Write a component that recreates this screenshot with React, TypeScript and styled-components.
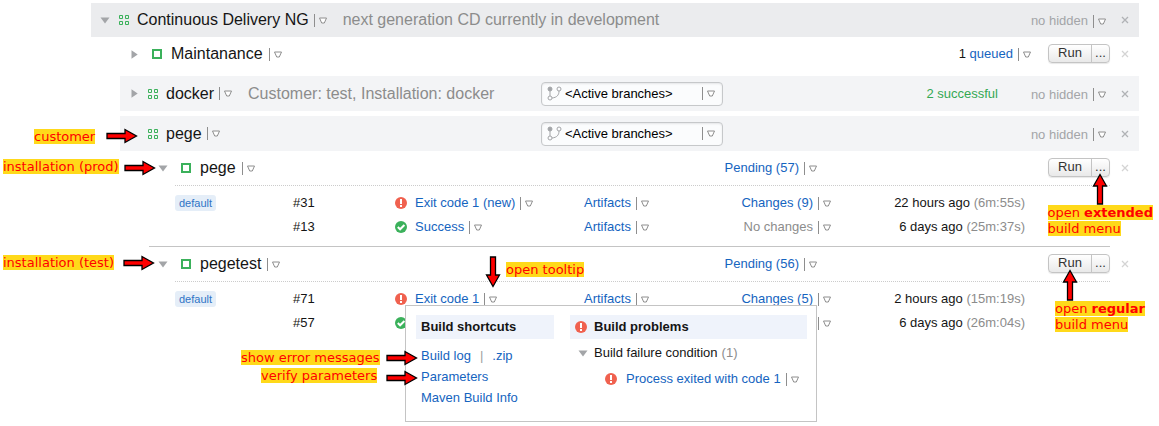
import React from "react";
import styled, { createGlobalStyle } from "styled-components";

const c = {
  text: "#151515",
  link: "#1564c0",
  muted: "#8c8c8c",
  faint: "#a3a5a8",
  green: "#34a853",
  red: "#f0614f",
};

const Global = createGlobalStyle`
  * { box-sizing: border-box; }
  body {
    margin: 0;
    background: #fff;
    color: ${c.text};
    font: 13px/16px "Liberation Sans", Arial, sans-serif;
  }
  button, select { font: inherit; color: inherit; }
  svg { display: block; flex: none; }
`;

const Page = styled.main`
  position: relative;
  min-width: 1100px;
  min-height: 100vh;
  padding: 3px 20px 0 91px;
`;

const Children = styled.div`
  padding-left: 29px;
`;

const Row = styled.div<{ $bg?: string; $height?: number; $after?: number }>`
  display: flex;
  align-items: center;
  height: ${(p) => p.$height || 34}px;
  margin-bottom: ${(p) => p.$after || 0}px;
  padding: 0 10px 0 9px;
  background: ${(p) => p.$bg || "transparent"};
  white-space: nowrap;
`;

const Spacer = styled.div`
  flex: 1;
`;

const IconButton = styled.button`
  display: flex;
  align-items: center;
  justify-content: center;
  width: 10px;
  height: 16px;
  padding: 0;
  border: 0;
  background: none;
  color: ${c.faint};
`;

const TogglePlace = styled.span`
  width: 10px;
`;

const CloseButton = styled(IconButton)<{ $light?: boolean }>`
  width: 8px;
  margin-left: ${(p) => (p.$light ? 11 : 15)}px;
  color: ${(p) => (p.$light ? "#d4d4d4" : "#b0b2b5")};
`;

const TypeIcon = styled.span<{ $before: number; $after: number }>`
  margin: 0 ${(p) => p.$after}px 0 ${(p) => p.$before}px;
`;

const Name = styled.h2`
  margin: 0;
  font-size: 16px;
  line-height: 20px;
  font-weight: 400;
`;

const Description = styled.span`
  margin-left: 16px;
  font-size: 16px;
  line-height: 20px;
  color: ${c.muted};
`;

const CaretButton = styled.button<{ $gap?: number }>`
  display: inline-flex;
  align-items: center;
  gap: 4px;
  height: 13px;
  margin-left: ${(p) => p.$gap ?? 5}px;
  padding: 0;
  border: 0;
  background: none;
  vertical-align: middle;
  &::before {
    content: "";
    width: 1px;
    height: 13px;
    background: #8e8e8e;
  }
`;

const Link = styled.a`
  color: ${c.link};
  text-decoration: none;
`;

const Successful = styled.span`
  width: 275px;
  text-align: right;
  color: ${c.green};
`;

const Hidden = styled.span`
  display: flex;
  align-items: center;
  justify-content: flex-end;
  width: 108px;
  padding-top: 2px;
  color: ${c.faint};
`;

const BranchBox = styled.label`
  display: flex;
  align-items: center;
  width: 182px;
  height: 24px;
  padding: 0 7px 0 5px;
  border: 1px solid #c6c8ca;
  border-radius: 4px;
  background: #fbfcfd;
  box-shadow: inset 0 1px 2px #e4e5e7;
  color: #000;
`;

const BranchSelect = styled.select`
  appearance: none;
  flex: 1;
  min-width: 0;
  margin-left: 3px;
  padding: 0;
  border: 0;
  background: none;
`;

const SelectCaret = styled.span`
  display: flex;
  align-items: center;
  gap: 4px;
  padding-left: 4px;
  &::before {
    content: "";
    width: 1px;
    height: 13px;
    background: #8e8e8e;
  }
`;

const Pending = styled.span<{ $right: number }>`
  display: flex;
  align-items: center;
  margin-right: ${(p) => p.$right}px;
`;

const RunGroup = styled.div`
  display: flex;
  height: 19px;
  border: 1px solid #c4c4c4;
  border-radius: 4px;
  background: linear-gradient(#fff, #e9e9e9);
  box-shadow: 0 1px 1px #e8e8e8;
  margin-bottom: 2px;
`;

const RunButton = styled.button<{ $width: number }>`
  width: ${(p) => p.$width}px;
  padding: 0;
  border: 0;
  background: none;
  color: #333;
  line-height: 16px;
  & + & {
    border-left: 1px solid #c4c4c4;
  }
`;

const Installation = styled.section`
  padding-left: 29px;
`;

const Builds = styled.div`
  margin: 0 29px 0 26px;
  padding: 5px 0 7px;
  border-top: 1px dotted #ccc;
`;

const Divider = styled.hr`
  height: 1px;
  margin: 0 29px 0 0;
  border: 0;
  background: #c4c4c4;
`;

const Table = styled.table`
  width: 100%;
  table-layout: fixed;
  border-collapse: collapse;
  white-space: nowrap;
`;

const Cell = styled.td<{ $right?: boolean; $end?: number }>`
  height: 24px;
  padding: 0 ${(p) => p.$end || 0}px 0 0;
  text-align: ${(p) => (p.$right ? "right" : "left")};
`;

const Inline = styled.span<{ $right?: boolean }>`
  position: relative;
  display: flex;
  align-items: center;
  justify-content: ${(p) => (p.$right ? "flex-end" : "flex-start")};
`;

const StatusLink = styled(Link)`
  margin-left: 8px;
`;

const Tag = styled.span`
  display: block;
  width: max-content;
  padding: 0 4px;
  border-radius: 3px;
  background: #e5eef8;
  color: #2f74c6;
  font-size: 11px;
  line-height: 16px;
`;

const Grey = styled.span`
  color: ${c.muted};
`;

const Popup = styled.div`
  position: absolute;
  z-index: 2;
  top: 14px;
  left: 10px;
  display: flex;
  gap: 16px;
  width: 412px;
  height: 117px;
  padding: 9px 9px 0 10px;
  border: 1px solid #c4c4c4;
  background: #fff;
`;

const PopupColumn = styled.div<{ $width?: number }>`
  flex: ${(p) => (p.$width ? `0 0 ${p.$width}px` : "1")};
`;

const PopupTitle = styled.h3`
  display: flex;
  align-items: center;
  gap: 7px;
  height: 24px;
  margin: 0 0 6px;
  padding: 0 5px;
  background: #eff3fb;
  font-size: 13px;
`;

const Shortcuts = styled.ul`
  margin: 0;
  padding: 3px 0 0 5px;
  list-style: none;
`;

const Shortcut = styled.li`
  height: 21px;
`;

const Pipe = styled.span`
  margin: 0 9px;
  color: #a0a0a0;
`;

const Problem = styled.div<{ $indent: number; $gap: number }>`
  display: flex;
  align-items: center;
  height: 16px;
  gap: ${(p) => p.$gap}px;
  margin-bottom: 10px;
  padding-left: ${(p) => p.$indent}px;
`;

const ProblemText = styled.span`
  display: flex;
  align-items: center;
  gap: 4px;
`;

const Note = styled.div<{ $left?: number; $right?: number; $top: number }>`
  position: absolute;
  z-index: 3;
  top: ${(p) => p.$top}px;
  ${(p) => (p.$left !== undefined ? `left: ${p.$left}px;` : `right: ${p.$right}px;`)}
  color: #f00;
  font: 13px/16px "DejaVu Sans", Verdana, sans-serif;
  white-space: nowrap;
`;

const Mark = styled.mark`
  display: block;
  width: max-content;
  height: 15px;
  margin-bottom: 1px;
  background: #ffd91a;
  color: inherit;
  line-height: 15px;
`;

const Pointer = styled.div<{ $left?: number; $right?: number; $top: number; $turn?: number }>`
  position: absolute;
  z-index: 3;
  top: ${(p) => p.$top}px;
  ${(p) => (p.$left !== undefined ? `left: ${p.$left}px;` : `right: ${p.$right}px;`)}
  transform: rotate(${(p) => p.$turn || 0}deg);
`;

const Triangle = () => (
  <svg width="8" height="7" viewBox="0 0 8 7">
    <path d="M.5 1h7L5.300 6H2.700z" fill="#fff" stroke="#8e8e8e" strokeLinejoin="round" />
  </svg>
);

const Caret = ({ gap, label }: { gap?: number; label: string }) => (
  <CaretButton $gap={gap} aria-label={label}>
    <Triangle />
  </CaretButton>
);

const Toggle = ({ open }: { open: boolean }) => (
  <IconButton aria-label="Toggle" aria-expanded={open}>
    {open ? (
      <svg width="10" height="7" viewBox="0 0 10 7"><path d="M.5 .5h9L5 6.5z" fill="currentColor" /></svg>
    ) : (
      <svg width="7" height="9" viewBox="0 0 7 9"><path d="M.5 .3v8.4L6.7 4.5z" fill="currentColor" /></svg>
    )}
  </IconButton>
);

const Close = ({ light }: { light?: boolean }) => (
  <CloseButton $light={light} aria-label="Hide">
    <svg width="8" height="8" viewBox="0 0 8 8"><path d="M1 1l6 6M7 1L1 7" stroke="currentColor" strokeWidth="1.3" /></svg>
  </CloseButton>
);

const ProjectIcon = () => (
  <svg width="10" height="10" viewBox="0 0 10 10" fill="none" stroke="#3bb15b">
    <path d="M.5.5h3v3h-3zM6.5.5h3v3h-3zM.5 6.5h3v3h-3zM6.5 6.5h3v3h-3z" />
  </svg>
);

const ConfigIcon = () => (
  <svg width="10" height="10" viewBox="0 0 10 10">
    <path d="M1 1h8v8H1z" fill="#fff" stroke="#3bb15b" strokeWidth="2" />
  </svg>
);

const ErrorIcon = () => (
  <svg width="12" height="12" viewBox="0 0 12 12">
    <circle cx="6" cy="6" r="6" fill={c.red} />
    <path d="M5 2h2v5H5zM5 8h2v2H5z" fill="#fff" />
  </svg>
);

const SuccessIcon = () => (
  <svg width="12" height="12" viewBox="0 0 12 12">
    <circle cx="6" cy="6" r="6" fill="#3bb15b" />
    <path d="M2.8 6l2.3 2.3L9.4 4" fill="none" stroke="#fff" strokeWidth="2" />
  </svg>
);

const BranchIcon = () => (
  <svg width="15" height="15" viewBox="0 0 15 15" fill="none" stroke="#a3a5a8">
    <circle cx="3" cy="3" r="2" fill="#a3a5a8" />
    <circle cx="3" cy="12" r="2" />
    <circle cx="12" cy="3" r="2" />
    <path d="M3 5v5M12 5c0 4-2 6.500-7 7" />
  </svg>
);

const Arrow = () => (
  <svg width="32" height="16" viewBox="0 0 32 16">
    <path d="M1 5.500h18V1.500L30.500 8 19 14.500v-4H1z" fill="#f00" stroke="#000" strokeWidth="1.300" />
  </svg>
);

const Branches = ({ label }: { label: string }) => (
  <BranchBox>
    <BranchIcon />
    <BranchSelect aria-label={label}>
      <option>&lt;Active branches&gt;</option>
    </BranchSelect>
    <SelectCaret><Triangle /></SelectCaret>
  </BranchBox>
);

type ProjectProps = {
  name: string;
  open?: boolean;
  top?: boolean;
  description?: string;
  branches?: boolean;
  status?: string;
  after?: number;
};

const Project = ({ name, open, top, description, branches, status, after }: ProjectProps) => (
  <Row $bg={top ? "#ebecee" : "#f3f4f6"} $height={top ? 34 : 35} $after={after}>
    {open === undefined ? <TogglePlace /> : <Toggle open={open} />}
    <TypeIcon $before={9} $after={8}><ProjectIcon /></TypeIcon>
    <Name>{name}</Name>
    <Caret label={`${name} menu`} />
    {description && <Description>{description}</Description>}
    <Spacer />
    {branches && <Branches label={`${name} branches`} />}
    {branches && <Successful>{status}</Successful>}
    <Hidden>no hidden<Caret label="Hidden configurations" /></Hidden>
    <Close />
  </Row>
);

type ConfigProps = { name: string; open: boolean; children: React.ReactNode; right: number; after?: number };

const Config = ({ name, open, children, right, after }: ConfigProps) => (
  <Row $after={after}>
    <Toggle open={open} />
    <TypeIcon $before={13} $after={9}><ConfigIcon /></TypeIcon>
    <Name>{name}</Name>
    <Caret gap={6} label={`${name} menu`} />
    <Spacer />
    <Pending $right={right}>{children}<Caret label="Queue details" /></Pending>
    <RunGroup>
      <RunButton $width={42}>Run</RunButton>
      <RunButton $width={18} aria-label="Run custom build">...</RunButton>
    </RunGroup>
    <Close light />
  </Row>
);

type Build = {
  number: string;
  ok?: boolean;
  status?: string;
  artifacts?: boolean;
  changes?: string;
  when: string;
  took: string;
  popup?: boolean;
};

const BuildPopup = () => (
  <Popup role="tooltip">
    <PopupColumn $width={138}>
      <PopupTitle>Build shortcuts</PopupTitle>
      <Shortcuts>
        <Shortcut><Link href="#log">Build log</Link><Pipe>|</Pipe><Link href="#zip">.zip</Link></Shortcut>
        <Shortcut><Link href="#parameters">Parameters</Link></Shortcut>
        <Shortcut><Link href="#maven">Maven Build Info</Link></Shortcut>
      </Shortcuts>
    </PopupColumn>
    <PopupColumn>
      <PopupTitle><ErrorIcon />Build problems</PopupTitle>
      <Problem $indent={8} $gap={6}>
        <Toggle open />
        <ProblemText>Build failure condition <Grey>(1)</Grey></ProblemText>
      </Problem>
      <Problem $indent={35} $gap={9}>
        <ErrorIcon />
        <ProblemText>
          <Link href="#problem">Process exited with code 1</Link>
          <Caret gap={1} label="Problem menu" />
        </ProblemText>
      </Problem>
    </PopupColumn>
  </Popup>
);

const BuildTable = ({ builds }: { builds: Build[] }) => (
  <Table>
    <colgroup>
      <col width="118" />
      <col width="102" />
      <col />
      <col width="159" />
      <col width="88" />
      <col width="279" />
    </colgroup>
    <tbody>
      {builds.map((b, i) => (
        <tr key={b.number}>
          <Cell>{i === 0 && <Tag>default</Tag>}</Cell>
          <Cell>{b.number}</Cell>
          <Cell>
            <Inline>
              {b.ok ? <SuccessIcon /> : <ErrorIcon />}
              {b.status && <StatusLink href="#build">{b.status}</StatusLink>}
              {b.status && <Caret label="Build details" />}
              {b.popup && <BuildPopup />}
            </Inline>
          </Cell>
          <Cell>
            {b.artifacts && <Inline><Link href="#artifacts">Artifacts</Link><Caret label="Artifacts list" /></Inline>}
          </Cell>
          <Cell>
            <Inline $right>
              {b.changes && (b.changes === "No changes" ? <Grey>{b.changes}</Grey> : <Link href="#changes">{b.changes}</Link>)}
              <Caret label="Changes list" />
            </Inline>
          </Cell>
          <Cell $right $end={85}>{b.when} <Grey>({b.took})</Grey></Cell>
        </tr>
      ))}
    </tbody>
  </Table>
);

const prodBuilds: Build[] = [
  { number: "#31", status: "Exit code 1 (new)", artifacts: true, changes: "Changes (9)", when: "22 hours ago", took: "6m:55s" },
  { number: "#13", ok: true, status: "Success", artifacts: true, changes: "No changes", when: "6 days ago", took: "25m:37s" },
];

const testBuilds: Build[] = [
  { number: "#71", status: "Exit code 1", artifacts: true, changes: "Changes (5)", when: "2 hours ago", took: "15m:19s", popup: true },
  { number: "#57", ok: true, when: "6 days ago", took: "26m:04s" },
];

export default function App() {
  return (
    <Page>
      <Global />
      <Project top open name="Continuous Delivery NG" description="next generation CD currently in development" />
      <Children>
        <Config name="Maintanance" open={false} right={17} after={5}>
          <span>1 <Link href="#queue">queued</Link></span>
        </Config>
        <Project
          name="docker"
          open={false}
          description="Customer: test, Installation: docker"
          branches
          status="2 successful"
          after={5}
        />
        <Project name="pege" branches />
        <Installation>
          <Config name="pege" open right={231}><Link href="#pending">Pending (57)</Link></Config>
          <Builds><BuildTable builds={prodBuilds} /></Builds>
          <Divider />
          <Config name="pegetest" open right={231}><Link href="#pending">Pending (56)</Link></Config>
          <Builds><BuildTable builds={testBuilds} /></Builds>
        </Installation>
      </Children>

      <Note $left={34} $top={129}><Mark>customer</Mark></Note>
      <Pointer $left={106} $top={128}><Arrow /></Pointer>
      <Note $left={3} $top={159}><Mark>installation (prod)</Mark></Note>
      <Pointer $left={124} $top={160}><Arrow /></Pointer>
      <Note $left={3} $top={255}><Mark>installation (test)</Mark></Note>
      <Pointer $left={123} $top={255}><Arrow /></Pointer>
      <Note $left={506} $top={262}><Mark>open tooltip</Mark></Note>
      <Pointer $left={477} $top={264} $turn={90}><Arrow /></Pointer>
      <Note $left={241} $top={350}><Mark>show error messages</Mark></Note>
      <Pointer $left={386} $top={350}><Arrow /></Pointer>
      <Note $left={261} $top={368}><Mark>verify parameters</Mark></Note>
      <Pointer $left={386} $top={370}><Arrow /></Pointer>
      <Note $right={6} $top={205}>
        <Mark>open <b>extended</b></Mark>
        <Mark>build menu</Mark>
      </Note>
      <Pointer $right={43} $top={181} $turn={-90}><Arrow /></Pointer>
      <Note $right={14} $top={301}>
        <Mark>open <b>regular</b></Mark>
        <Mark>build menu</Mark>
      </Note>
      <Pointer $right={73} $top={277} $turn={-90}><Arrow /></Pointer>
    </Page>
  );
}
